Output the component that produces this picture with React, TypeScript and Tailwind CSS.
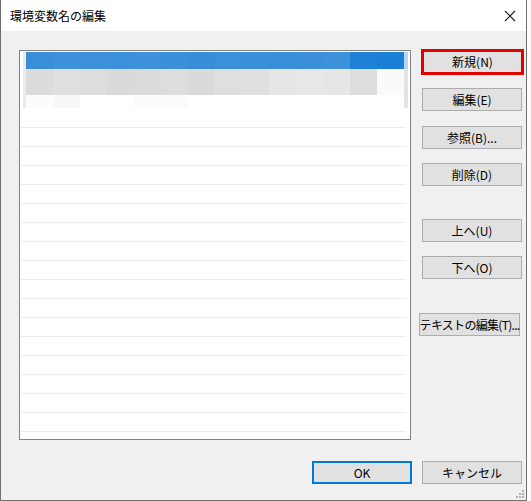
import React from "react"

const blueBlocks = [
  "bg-[#3a8ed8]",
  "bg-[#3d91da]",
  "bg-[#3b90d9]",
  "bg-[#3a90da]",
  "bg-[#3d92db]",
  "bg-[#3a8fd9]",
  "bg-[#388dd8]",
  "bg-[#3b90da]",
  "bg-[#3a8fd9]",
  "bg-[#388ed8]",
  "bg-[#3a8fd8]",
  "bg-[#3c91da]",
  "bg-[#1f81d6]",
  "bg-[#1a7fd6]",
]

const grayBlocks = [
  "bg-[#dcdcdc]",
  "bg-[#e0e0e0]",
  "bg-[#dedede]",
  "bg-[#dadada]",
  "bg-[#dbdbdb]",
  "bg-[#dddddd]",
  "bg-[#dadada]",
  "bg-[#dfdfdf]",
  "bg-[#e0e0e0]",
  "bg-[#e6e6e6]",
  "bg-[#e8e8e8]",
  "bg-[#e6e6e6]",
  "bg-[#dddddd]",
  "bg-[#fafafa]",
]

const faintBlocks = [
  "bg-[#fcfcfc]",
  "bg-[#f8f8f8]",
  "bg-white",
  "bg-white",
  "bg-[#fbfbfb]",
  "bg-[#fbfbfb]",
  "bg-white",
  "bg-white",
  "bg-white",
  "bg-white",
  "bg-white",
  "bg-white",
  "bg-white",
  "bg-white",
]

function Btn({ children, className = "" }: { children: React.ReactNode; className?: string }) {
  return (
    <div
      className={
        "h-[23px] flex items-center justify-center whitespace-nowrap bg-[#e1e1e1] border border-[#adadad] text-[12px] text-black leading-none " +
        className
      }
    >
      {children}
    </div>
  )
}

export default function App() {
  return (
    <div className="w-[531px] h-[501px] bg-white font-['Noto_Sans_CJK_JP','Noto_Sans',sans-serif]">
      <div className="w-[527px] h-[501px] border-x border-b border-[#707070] bg-[#f0f0f0] flex flex-col">
        {/* title bar */}
        <div className="h-[31px] bg-white flex items-center justify-between pl-[9px] pr-[9px]">
          <span className="text-[12px] text-black">環境変数名の編集</span>
          <svg width="12" height="12" viewBox="0 0 12 12" className="mr-[1px]">
            <path d="M1 1 L11 11 M11 1 L1 11" stroke="#1a1a1a" strokeWidth="1.1" fill="none" />
          </svg>
        </div>

        <div className="relative flex-1 flex flex-col pl-[18px] pt-[19px]">
          <div className="flex">
            {/* list */}
            <div className="w-[392px] h-[390px] border border-[#828282] bg-white overflow-hidden">
              <div className="flex h-[58px] pl-[3px] pt-[1px]">
                <div className="w-[3px] h-[56px] bg-[#ebebeb]" />
                <div className="w-[378px] flex flex-col">
                  <div className="flex h-[17px]">
                    {blueBlocks.map((c, i) => (
                      <div key={i} className={"flex-1 " + c} />
                    ))}
                  </div>
                  <div className="flex h-[26px]">
                    {grayBlocks.map((c, i) => (
                      <div key={i} className={"flex-1 " + c} />
                    ))}
                  </div>
                  <div className="flex h-[13px]">
                    {faintBlocks.map((c, i) => (
                      <div key={i} className={"flex-1 " + c} />
                    ))}
                  </div>
                </div>
                <div className="w-[4px] h-[56px] flex flex-col">
                  <div className="h-[17px] bg-[#b9d4ec]" />
                  <div className="flex-1 bg-[#e4e4e4]" />
                </div>
              </div>
              <div className="ml-[1px] w-[385px]">
                {Array.from({ length: 18 }).map((_, i) => (
                  <div key={i} className="h-[19px] border-b border-[#ececec]" />
                ))}
              </div>
            </div>

            {/* side buttons */}
            <div className="ml-[11px] w-[100px] flex flex-col">
              <div className="-ml-[1px] -mt-[1px] w-[103px] h-[26px] border-[3px] border-[#e50000] bg-[#e1e1e1] flex items-center justify-center text-[12px] text-black leading-none">
                新規(N)
              </div>
              <Btn className="mt-[13px]">編集(E)</Btn>
              <Btn className="mt-[15px]">参照(B)...</Btn>
              <Btn className="mt-[14px]">削除(D)</Btn>
              <Btn className="mt-[33px]">上へ(U)</Btn>
              <Btn className="mt-[14px]">下へ(O)</Btn>
              <Btn className="mt-[34px] -ml-[3px] w-[101px] tracking-[-0.7px]">テキストの編集(T)...</Btn>
            </div>
          </div>

          {/* bottom buttons */}
          <div className="flex mt-[21px] ml-[293px]">
            <div className="w-[100px] h-[23px] border-2 border-[#0078d7] bg-[#e1e1e1] flex items-center justify-center text-[12px] text-black leading-none">
              OK
            </div>
            <Btn className="w-[100px] ml-[10px]">キャンセル</Btn>
          </div>

          {/* size grip */}
          <svg width="8" height="8" viewBox="0 0 8 8" className="absolute right-[2px] bottom-[2px]">
            <rect x="6" y="0" width="2" height="2" fill="#b0b0b0" />
            <rect x="3" y="3" width="2" height="2" fill="#b0b0b0" />
            <rect x="6" y="3" width="2" height="2" fill="#b0b0b0" />
            <rect x="0" y="6" width="2" height="2" fill="#b0b0b0" />
            <rect x="3" y="6" width="2" height="2" fill="#b0b0b0" />
            <rect x="6" y="6" width="2" height="2" fill="#b0b0b0" />
          </svg>
        </div>
      </div>
    </div>
  )
}
